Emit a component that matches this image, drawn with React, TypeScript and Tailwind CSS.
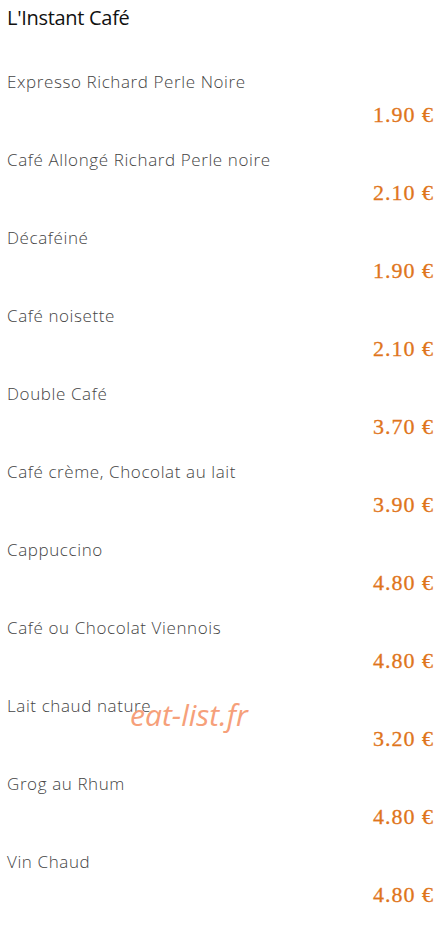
import React from "react";

const items = [
  { name: "Expresso Richard Perle Noire", price: "1.90 €" },
  { name: "Café Allongé Richard Perle noire", price: "2.10 €" },
  { name: "Décaféiné", price: "1.90 €" },
  { name: "Café noisette", price: "2.10 €" },
  { name: "Double Café", price: "3.70 €" },
  { name: "Café crème, Chocolat au lait", price: "3.90 €" },
  { name: "Cappuccino", price: "4.80 €" },
  { name: "Café ou Chocolat Viennois", price: "4.80 €" },
  { name: "Lait chaud nature", price: "3.20 €" },
  { name: "Grog au Rhum", price: "4.80 €" },
  { name: "Vin Chaud", price: "4.80 €" },
];

export default function App() {
  return (
    <div className="relative w-[441px] h-[928px] bg-white overflow-hidden px-[7px] font-['Open_Sans',sans-serif]">
      <h2 className="pt-[6px] h-[24px] leading-[24px] text-[20px] font-medium tracking-[-0.3px] text-[#111] box-content">
        L'Instant Café
      </h2>

      <div className="mt-[40px] flex flex-col">
        {items.map((item) => (
          <div key={item.name} className="h-[78px] flex flex-col">
            <div className="h-[24px] leading-[24px] text-[17px] font-light tracking-[0.6px] text-[#444]">
              {item.name}
            </div>
            <div className="mt-[7px] h-[28px] leading-[28px] text-right text-[22px] text-[#df751c] font-['Liberation_Serif',serif] tracking-[1px] [-webkit-text-stroke:0.3px_#df751c]">
              {item.price}
            </div>
          </div>
        ))}
      </div>

      {/* watermark */}
      <div className="absolute left-[130px] top-[695px] text-[30px] italic text-[#f6a07a] font-['Open_Sans',sans-serif] leading-[40px]">
        eat-list.fr
      </div>
    </div>
  );
}
